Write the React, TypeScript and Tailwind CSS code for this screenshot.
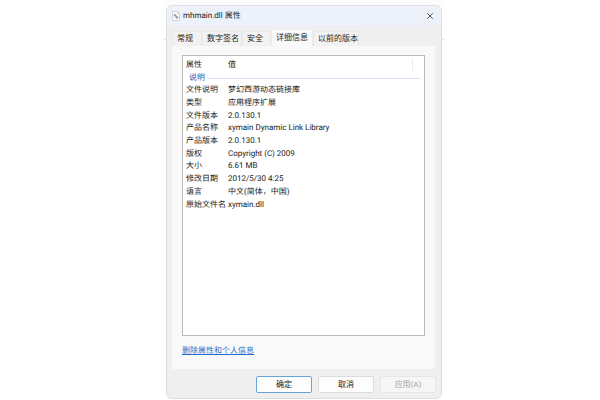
import React from 'react';
import { X } from 'lucide-react';

interface Detail {
  name: string;
  value: string;
}

const tabs = [
  { label: '常规', width: 'w-[30px]' },
  { label: '数字签名', width: 'w-[40px]' },
  { label: '安全', width: 'w-[29px]' },
  { label: '详细信息', width: 'w-[42px]', active: true },
  { label: '以前的版本', width: 'w-[46px]' },
];

const details: Detail[] = [
  { name: '文件说明', value: '梦幻西游动态链接库' },
  { name: '类型', value: '应用程序扩展' },
  { name: '文件版本', value: '2.0.130.1' },
  { name: '产品名称', value: 'xymain Dynamic Link Library' },
  { name: '产品版本', value: '2.0.130.1' },
  { name: '版权', value: 'Copyright (C) 2009' },
  { name: '大小', value: '6.61 MB' },
  { name: '修改日期', value: '2012/5/30 4:25' },
  { name: '语言', value: '中文(简体，中国)' },
  { name: '原始文件名', value: 'xymain.dll' },
];

const FileIcon = () => (
  <svg viewBox="0 0 8 10" className="w-2 h-[10px] shrink-0" fill="none">
    <path d="M.5.5h5l2 2v7h-7z" fill="#fbfbfb" stroke="#c4c6ca" strokeWidth=".7" />
    <path d="M5.5.5v2h2" stroke="#c4c6ca" strokeWidth=".6" />
    <circle cx="3" cy="4.3" r="1" fill="#b3b6ba" stroke="#8d9196" strokeWidth=".7" />
    <circle cx="4.9" cy="6.4" r="1.1" fill="#b3b6ba" stroke="#8d9196" strokeWidth=".7" />
  </svg>
);

const TitleBar = () => (
  <header className="flex items-center h-5 pl-[5px] pr-[6px] bg-[#edf1f9]">
    <FileIcon />
    <h1 className="ml-[3px] flex-1">mhmain.dll 属性</h1>
    <button aria-label="关闭" className="flex items-center justify-center w-[10px] h-[10px] text-[#333]">
      <X size={10} strokeWidth={2} />
    </button>
  </header>
);

const Tabs = () => (
  <div role="tablist" className="flex items-end h-5">
    {tabs.map((tab) => (
      <button
        key={tab.label}
        role="tab"
        aria-selected={!!tab.active}
        className={`${tab.width} flex items-center pl-1 whitespace-nowrap border border-b-0 ${
          tab.active ? 'h-[17px] border-[#ececec] bg-[#f9f9f9]' : 'h-[15px] border-[#e8e8e8] bg-[#f2f2f2]'
        }`}
      >
        {tab.label}
      </button>
    ))}
  </div>
);

const DetailList = () => (
  <div className="h-[281px] border border-[#b9b9b9] bg-white pt-px pl-[3px] pr-1">
    <table className="w-full h-[154px] table-fixed border-collapse text-left">
      <thead>
        <tr className="h-[15px]">
          <th className="w-[42px] p-0 font-normal">属性</th>
          <th className="p-0 font-normal">
            <div className="flex h-[13px] items-center border-r border-[#ececec] mr-[7px]">值</div>
          </th>
        </tr>
        <tr className="h-3">
          <th colSpan={2} className="p-0 font-normal">
            <div className="flex items-center gap-[3px] pl-[3px] text-[#2c56ae]">
              说明
              <span className="h-px flex-1 bg-[#d9ddec]" />
            </div>
          </th>
        </tr>
      </thead>
      <tbody>
        {details.map((item) => (
          <tr key={item.name}>
            <td className="p-0 whitespace-nowrap">{item.name}</td>
            <td className="p-0 whitespace-nowrap">{item.value}</td>
          </tr>
        ))}
      </tbody>
    </table>
  </div>
);

const App: React.FC = () => {
  const button = 'flex w-14 h-[17px] items-center justify-center rounded-[2px] border';

  return (
    <div className="min-h-screen flex items-start justify-center bg-white pl-2 font-['Roboto','Noto_Sans_CJK_SC',sans-serif] text-[8px] leading-[12px] text-[#222] [text-rendering:geometricPrecision]">
      <div className="relative w-full max-w-[280px] px-[2px] pt-[5px]">
        {/* Faint edges of the window behind the dialog */}
        <div className="absolute inset-x-0 top-0 h-[10px] bg-[#fcfcfc]" />
        <div className="absolute inset-x-0 top-[39px] h-px bg-[#e4e4e4]" />

        <main className="relative overflow-hidden rounded-[6px] border border-[#dedede] bg-[#efefef]">
          <TitleBar />
          <div className="px-[5px] pb-[5px]">
            <Tabs />
            <section className="h-[323px] bg-[#f9f9f9] mr-px px-[10px] pt-[9px]">
              <DetailList />
              <a href="#remove" className="mt-[9px] inline-block text-[#1c6fcb] underline">
                删除属性和个人信息
              </a>
            </section>
            <footer className="mt-[7px] flex justify-end gap-[6px]">
              <button className={`${button} border-[#68a3d8] bg-[#fdfdfd]`}>确定</button>
              <button className={`${button} border-[#dcdcdc] bg-[#fdfdfd]`}>取消</button>
              <button disabled className={`${button} border-[#e6e6e6] bg-[#f6f6f6] text-[#a3a3a3]`}>
                应用(A)
              </button>
            </footer>
          </div>
        </main>
      </div>
    </div>
  );
};

export default App;
